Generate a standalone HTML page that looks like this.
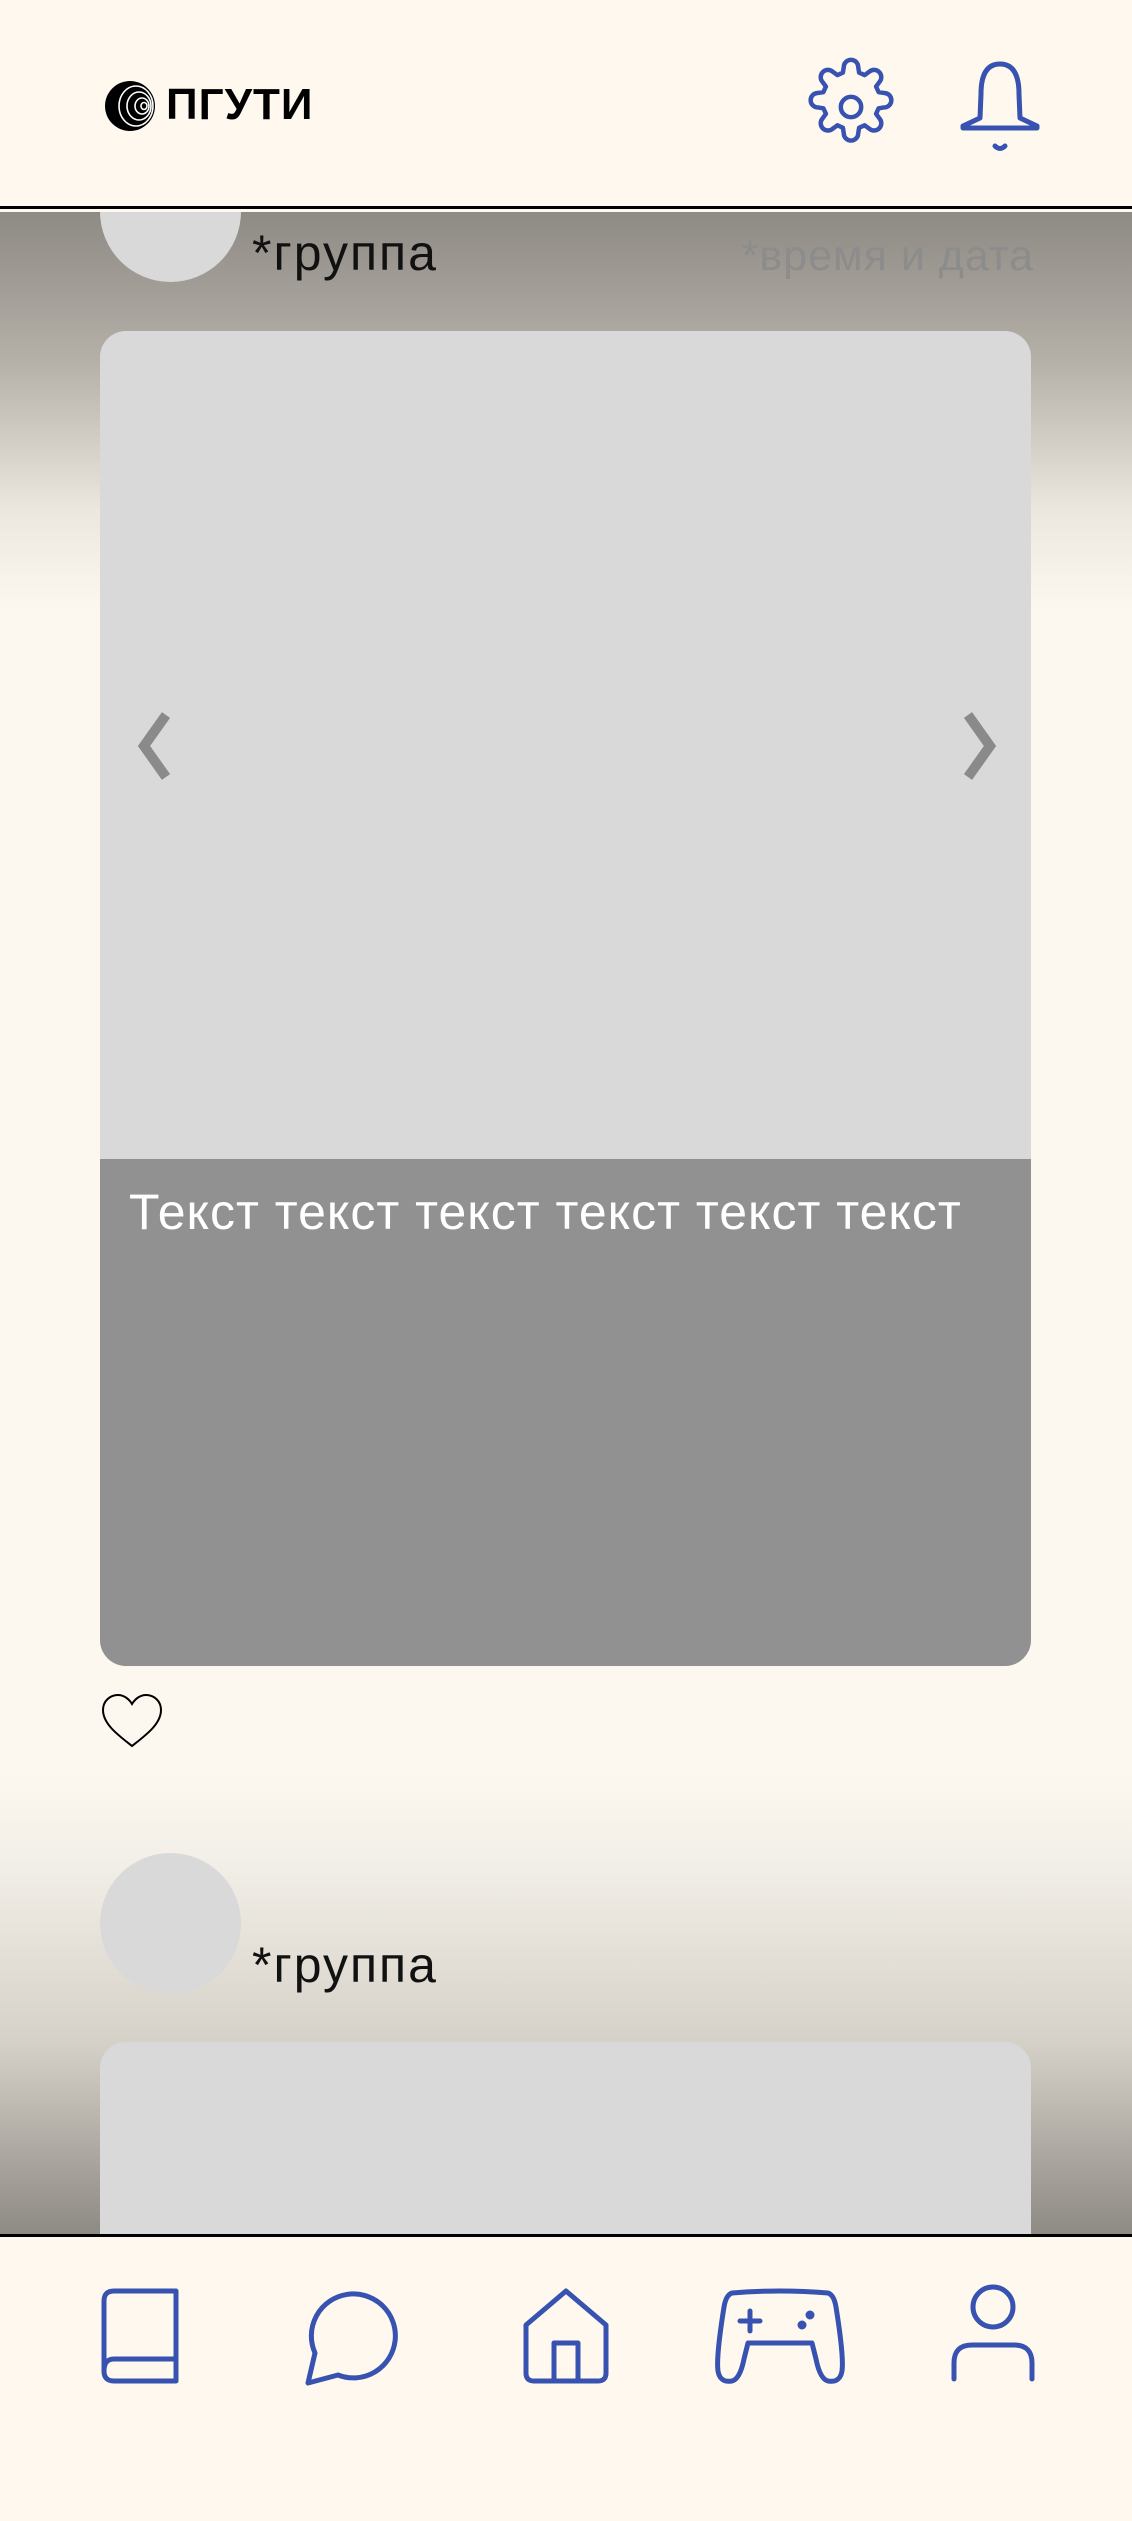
<!DOCTYPE html>
<html><head><meta charset="utf-8"><style>
*{margin:0;padding:0;box-sizing:border-box}
body{width:1132px;height:2521px;overflow:hidden;background:#fef8ef;font-family:"Liberation Sans",sans-serif;position:relative}
.hdr{position:absolute;left:0;top:0;width:1132px;height:209px;background:#fef8ef;border-bottom:3px solid #000;z-index:3}
.main{position:absolute;left:0;top:212px;width:1132px;height:2022px;overflow:hidden;
background:linear-gradient(to bottom,#8e8a84 0px,#b5b1a9 150px,#ece8e0 300px,#fdf8ef 400px,#fdf8ef 1560px,#f2efe8 1650px,#d6d1c8 1830px,#8e8a84 2022px)}
.nav{position:absolute;left:0;top:2234px;width:1132px;height:287px;background:#fef8ef;border-top:3px solid #000;z-index:3}
.av{position:absolute;width:141px;height:141px;border-radius:50%;background:#d9d9d9}
.grp{position:absolute;font-size:50px;letter-spacing:2px;color:#111}
.card{position:absolute;left:100px;width:931px;background:#d9d9d9;border-radius:26px;overflow:hidden}
</style></head><body>
<div class="hdr">
<svg style="position:absolute;left:104px;top:80px" width="52" height="52" viewBox="0 0 52 52"><circle cx="26" cy="26" r="25" fill="#000"/><g fill="none" stroke="#fff" stroke-width="1.6"><ellipse cx="32" cy="26" rx="17" ry="20"/><ellipse cx="35" cy="26" rx="12" ry="14"/><ellipse cx="38" cy="26" rx="7" ry="8"/><ellipse cx="40" cy="26" rx="3" ry="3.5"/></g></svg>
<div style="position:absolute;left:166px;top:80px;font-size:44px;font-weight:bold;color:#000;letter-spacing:1px;line-height:50px;transform:scaleX(1.0);transform-origin:left">ПГУТИ</div>
<svg style="position:absolute;left:800px;top:56px" width="102" height="102" viewBox="0 0 24 24" fill="none" stroke="#3752b0" stroke-width="1.05" stroke-linejoin="round"><path d="M10.3 2.6a1.7 1.7 0 0 1 3.4 0l.2 1.3 1.3.6 1.1-.8a1.7 1.7 0 0 1 2.4 2.4l-.8 1.1.6 1.3 1.3.2a1.7 1.7 0 0 1 0 3.4l-1.3.2-.6 1.3.8 1.1a1.7 1.7 0 0 1-2.4 2.4l-1.1-.8-1.3.6-.2 1.3a1.7 1.7 0 0 1-3.4 0l-.2-1.3-1.3-.6-1.1.8a1.7 1.7 0 0 1-2.4-2.4l.8-1.1-.6-1.3-1.3-.2a1.7 1.7 0 0 1 0-3.4l1.3-.2.6-1.3-.8-1.1a1.7 1.7 0 0 1 2.4-2.4l1.1.8 1.3-.6z"/><circle cx="12" cy="12" r="2.4"/></svg>
<svg style="position:absolute;left:955px;top:60px" width="90" height="94" viewBox="0 0 90 94" fill="none" stroke="#3752b0" stroke-width="5" stroke-linecap="round" stroke-linejoin="round"><path d="M45 4C30 4 26 18 26 34L25 58L8 66V68H82V66L65 58L64 34C64 18 60 4 45 4Z"/><path d="M40 86Q45 91 50 86"/></svg>
</div>
<div class="main">
<div class="av" style="left:100px;top:-71px"></div>
<div class="grp" style="left:252px;top:12px">*группа</div>
<div style="position:absolute;right:98px;top:20px;font-size:43px;letter-spacing:1px;color:#8c8c8c">*время и дата</div>
<div class="card" style="top:119px;height:1335px">
<div style="position:absolute;left:0;top:828px;width:931px;height:507px;background:#919191"></div>
<div style="position:absolute;left:29px;top:852px;font-size:50px;letter-spacing:1px;color:#fff;white-space:nowrap">Текст текст текст текст текст текст</div>
<svg style="position:absolute;left:34px;top:380px" width="40" height="70" viewBox="0 0 40 70"><path d="M32 4L10 35L32 66" fill="none" stroke="#8a8a8a" stroke-width="10"/></svg>
<svg style="position:absolute;left:860px;top:380px" width="40" height="70" viewBox="0 0 40 70"><path d="M8 4L30 35L8 66" fill="none" stroke="#8a8a8a" stroke-width="10"/></svg>
</div>
<svg style="position:absolute;left:100px;top:1480px" width="64" height="58" viewBox="0 0 64 58"><path d="M32 54C18 43 3 32 3 18C3 9 10 3 18 3C24 3 29 7 32 12C35 7 40 3 46 3C54 3 61 9 61 18C61 32 46 43 32 54Z" fill="none" stroke="#000" stroke-width="2"/></svg>
<div class="av" style="left:100px;top:1641px"></div>
<div class="grp" style="left:252px;top:1724px">*группа</div>
<div class="card" style="top:1830px;height:400px"></div>
</div>
<div class="nav">
<svg style="position:absolute;left:100px;top:50px" width="80" height="100" viewBox="0 0 80 100" fill="none" stroke="#3752b0" stroke-width="5" stroke-linejoin="round"><path d="M14 4H76V94H14Q4 94 4 84V14Q4 4 14 4Z"/><path d="M76 72H14Q4 72 4 84"/></svg>
<svg style="position:absolute;left:302px;top:50px" width="100" height="100" viewBox="0 0 100 100" fill="none" stroke="#3752b0" stroke-width="5" stroke-linejoin="round"><path d="M13 66A42 42 0 1 1 36 88L6 96Z"/></svg>
<svg style="position:absolute;left:520px;top:50px" width="92" height="100" viewBox="0 0 92 100" fill="none" stroke="#3752b0" stroke-width="5" stroke-linejoin="round"><path d="M46 4L86 38V86Q86 94 78 94H14Q6 94 6 86V38Z"/><path d="M34 94V56H58V94"/></svg>
<svg style="position:absolute;left:710px;top:50px" width="140" height="100" viewBox="0 0 140 100" fill="none" stroke="#3752b0" stroke-width="5" stroke-linejoin="round" stroke-linecap="round"><path d="M22 6Q70 2 118 6Q124 8 126 20Q134 70 132 84Q130 96 118 94Q110 92 106 72L102 56H38L34 72Q30 92 22 94Q10 96 8 84Q6 70 14 20Q16 8 22 6Z"/><path d="M30 34H50M40 24V44"/><circle cx="100" cy="28" r="2" fill="#3752b0"/><circle cx="92" cy="38" r="2" fill="#3752b0"/></svg>
<svg style="position:absolute;left:948px;top:46px" width="90" height="100" viewBox="0 0 90 100" fill="none" stroke="#3752b0" stroke-width="5" stroke-linecap="round"><circle cx="45" cy="24" r="20"/><path d="M6 96V80Q6 62 24 62H66Q84 62 84 80V96"/></svg>
</div>
</body></html>
